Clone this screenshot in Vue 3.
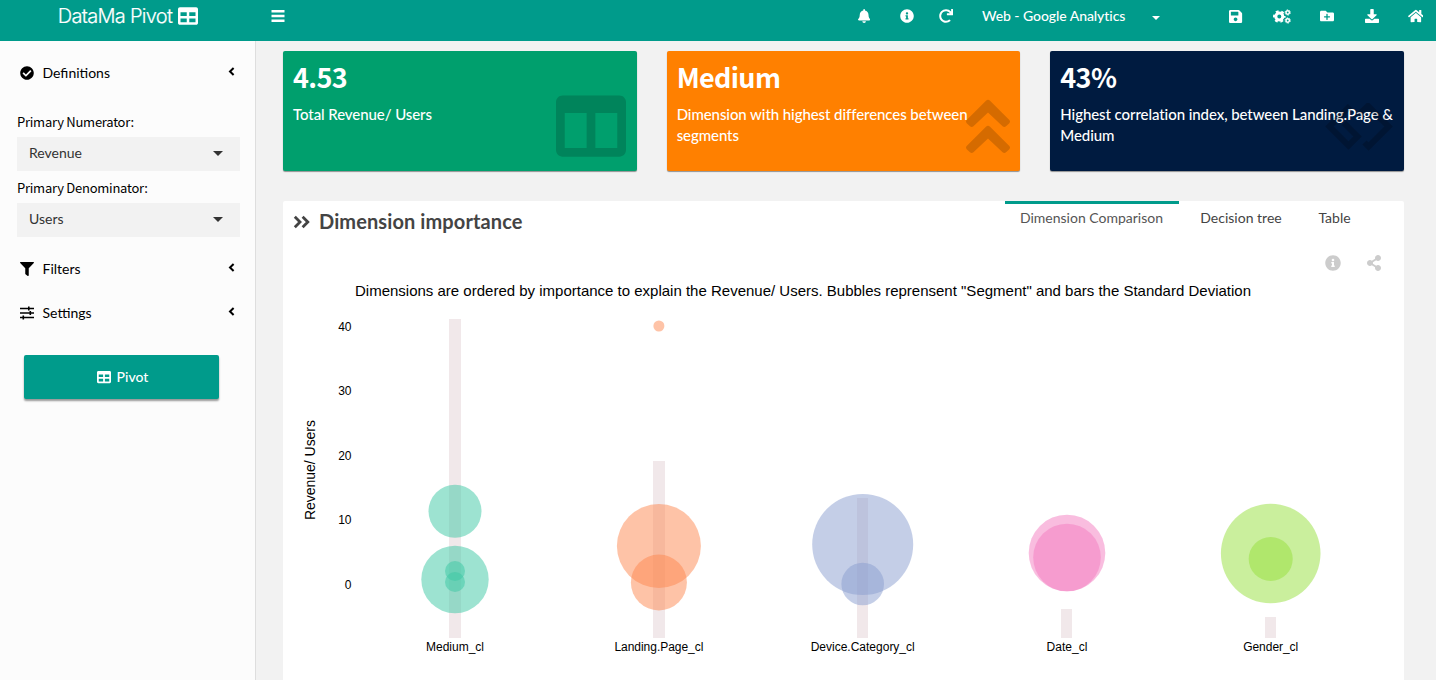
<script setup>
import { h } from 'vue'

const glyphs = {
  table: [512, 512, 'M464 32H48C21.49 32 0 53.49 0 80v352c0 26.51 21.49 48 48 48h416c26.51 0 48-21.49 48-48V80c0-26.51-21.49-48-48-48zM224 416H64v-96h160v96zm0-160H64v-96h160v96zm224 160H288v-96h160v96zm0-160H288v-96h160v96z'],
  columns: [512, 512, 'M464 32H48C21.49 32 0 53.49 0 80v352c0 26.51 21.49 48 48 48h416c26.51 0 48-21.49 48-48V80c0-26.51-21.49-48-48-48zM224 416H64V160h160v256zm224 0H288V160h160v256z'],
  bell: [448, 512, 'M224 512c35.32 0 63.97-28.65 63.97-64H160.03c0 35.35 28.65 64 63.97 64zm215.39-149.71c-19.32-20.76-55.47-51.99-55.47-154.29 0-77.7-54.48-139.9-127.94-155.16V32c0-17.67-14.32-32-31.98-32s-31.98 14.33-31.98 32v20.84C118.56 68.1 64.08 130.3 64.08 208c0 102.3-36.15 133.53-55.47 154.29-6 6.45-8.66 14.16-8.61 21.71.11 16.4 12.98 32 32.1 32h383.8c19.12 0 32-15.6 32.1-32 .05-7.55-2.61-15.27-8.61-21.71z'],
  info: [512, 512, 'M256 8C119.043 8 8 119.083 8 256c0 136.997 111.043 248 248 248s248-111.003 248-248C504 119.083 392.957 8 256 8zm0 110c23.196 0 42 18.804 42 42s-18.804 42-42 42-42-18.804-42-42 18.804-42 42-42zm56 254c0 6.627-5.373 12-12 12h-88c-6.627 0-12-5.373-12-12v-24c0-6.627 5.373-12 12-12h12v-64h-12c-6.627 0-12-5.373-12-12v-24c0-6.627 5.373-12 12-12h64c6.627 0 12 5.373 12 12v100h12c6.627 0 12 5.373 12 12v24z'],
  redo: [512, 512, 'M500.33 0h-47.41a12 12 0 0 0-12 12.57l4 82.76A247.42 247.42 0 0 0 256 8C119.34 8 7.9 119.53 8 256.19 8.1 393.07 119.1 504 256 504a247.1 247.1 0 0 0 166.18-63.91 12 12 0 0 0 .48-17.43l-34-34a12 12 0 0 0-16.38-.55A176 176 0 1 1 402.1 157.8l-101.53-4.87a12 12 0 0 0-12.57 12v47.41a12 12 0 0 0 12 12h200.33a12 12 0 0 0 12-12V12a12 12 0 0 0-12-12z'],
  save: [448, 512, 'M433.941 129.941l-83.882-83.882A48 48 0 0 0 316.118 32H48C21.49 32 0 53.49 0 80v352c0 26.51 21.49 48 48 48h352c26.51 0 48-21.49 48-48V163.882a48 48 0 0 0-14.059-33.941zM224 416c-35.346 0-64-28.654-64-64 0-35.346 28.654-64 64-64s64 28.654 64 64c0 35.346-28.654 64-64 64zm96-304.52V212c0 6.627-5.373 12-12 12H76c-6.627 0-12-5.373-12-12V108c0-6.627 5.373-12 12-12h228.52c3.183 0 6.235 1.264 8.485 3.515l3.48 3.48A11.996 11.996 0 0 1 320 111.48z'],
  folder: [512, 512, 'M464 128H272l-64-64H48C21.49 64 0 85.49 0 112v288c0 26.51 21.49 48 48 48h416c26.51 0 48-21.49 48-48V176c0-26.51-21.49-48-48-48zm-96 168c0 8.84-7.16 16-16 16h-72v72c0 8.84-7.16 16-16 16h-16c-8.84 0-16-7.16-16-16v-72h-72c-8.84 0-16-7.16-16-16v-16c0-8.84 7.16-16 16-16h72v-72c0-8.84 7.16-16 16-16h16c8.84 0 16 7.16 16 16v72h72c8.84 0 16 7.16 16 16v16z'],
  download: [512, 512, 'M216 0h80c13.3 0 24 10.7 24 24v168h87.7c17.8 0 26.7 21.5 14.1 34.1L269.7 378.3c-7.5 7.5-19.8 7.5-27.3 0L90.1 226.1c-12.6-12.6-3.7-34.1 14.1-34.1H192V24c0-13.3 10.7-24 24-24zm296 376v112c0 13.3-10.7 24-24 24H24c-13.3 0-24-10.7-24-24V376c0-13.3 10.7-24 24-24h146.7l49 49c20.1 20.1 52.5 20.1 72.6 0l49-49H488c13.3 0 24 10.7 24 24z'],
  home: [576, 512, 'M280.37 148.26L96 300.11V464a16 16 0 0 0 16 16l112.06-.29a16 16 0 0 0 15.92-16V368a16 16 0 0 1 16-16h64a16 16 0 0 1 16 16v95.64a16 16 0 0 0 16 16.05L464 480a16 16 0 0 0 16-16V300L295.67 148.26a12.19 12.19 0 0 0-15.3 0zM571.6 251.47L488 182.56V44.05a12 12 0 0 0-12-12h-56a12 12 0 0 0-12 12v72.61L318.47 43a48 48 0 0 0-61 0L4.34 251.47a12 12 0 0 0-1.6 16.9l25.5 31A12 12 0 0 0 45.15 301l235.22-193.74a12.19 12.19 0 0 1 15.3 0L530.9 301a12 12 0 0 0 16.9-1.6l25.5-31a12 12 0 0 0-1.7-16.93z'],
  check: [512, 512, 'M504 256c0 136.967-111.033 248-248 248S8 392.967 8 256 119.033 8 256 8s248 111.033 248 248zM227.314 387.314l184-184c6.248-6.248 6.248-16.379 0-22.627l-22.627-22.627c-6.248-6.249-16.379-6.249-22.628 0L216 308.118l-70.059-70.059c-6.248-6.248-16.379-6.248-22.628 0l-22.627 22.627c-6.248 6.248-6.248 16.379 0 22.627l104 104c6.249 6.249 16.379 6.249 22.628.001z'],
  filter: [512, 512, 'M487.976 0H24.028C2.71 0-8.047 25.866 7.058 40.971L192 225.941V432c0 7.831 3.821 15.17 10.237 19.662l80 55.98C298.02 518.69 320 507.493 320 487.98V225.941l184.947-184.97C520.021 25.896 509.338 0 487.976 0z'],
  sliders: [14, 14, 'M0 1.700h8V.500h1.600v1.200H14v1.600H9.600v1.100H8V3.300H0zM0 6.200h9.500V5h1.600v1.200H14v1.600h-2.900V9H9.500V7.800H0zM0 10.700h2.500V9.500h1.600v1.200H14v1.600H4.100v1.200H2.500v-1.200H0z'],
  share: [448, 512, 'M352 320c-22.608 0-43.387 7.819-59.79 20.895l-102.486-64.054a96.551 96.551 0 0 0 0-41.683l102.486-64.054C308.613 184.181 329.392 192 352 192c53.019 0 96-42.981 96-96S405.019 0 352 0s-96 42.981-96 96c0 7.158.79 14.13 2.276 20.841L155.79 180.895C139.387 167.819 118.608 160 96 160c-53.019 0-96 42.981-96 96s42.981 96 96 96c22.608 0 43.387-7.819 59.79-20.895l102.486 64.054A96.301 96.301 0 0 0 256 416c0 53.019 42.981 96 96 96s96-42.981 96-96-42.981-96-96-96z'],
  bars: [14, 12, 'M.5 0h13v2.500h-13zM.5 4.700h13v2.500h-13zM.5 9.400h13v2.500h-13z'],
  caret: [10, 5, 'M0 0h10L5 5z']
}

const Icon = (props) => {
  const [w, ht, d] = glyphs[props.name]
  return h('svg', { viewBox: `0 0 ${w} ${ht}`, width: (props.size * w) / ht, height: props.size, fill: 'currentColor' }, [h('path', { d })])
}
Icon.props = ['name', 'size']

const cards = [
  { tone: 'green', value: '4.53', label: 'Total Revenue/ Users' },
  { tone: 'orange', value: 'Medium', label: 'Dimension with highest differences between segments' },
  { tone: 'navy', value: '43%', label: 'Highest correlation index, between Landing.Page & Medium' }
]

const ticks = [[40, 326], [30, 390.500], [20, 455], [10, 519.500], [0, 584]]

const groups = [
  { name: 'Medium_cl', x: 455, top: 319, color: '#3cc8a3', w: 58, dots: [[511.300, 26.500], [579.500, 33.700], [571, 10], [582, 10]] },
  { name: 'Landing.Page_cl', x: 658.900, top: 461, color: '#fd8850', w: 89, dots: [[326, 5.500], [546, 42], [582.500, 28]] },
  { name: 'Device.Category_cl', x: 862.700, top: 498, color: '#8a9dd0', w: 104, dots: [[544.500, 50.500], [584, 21.300]] },
  { name: 'Date_cl', x: 1067, top: 609, color: '#f37bc0', w: 41, dots: [[553, 38.300], [557.500, 33.800]] },
  { name: 'Gender_cl', x: 1270.700, top: 617, color: '#95e03b', w: 55, dots: [[553.500, 49.800], [559, 22]] }
]
</script>

<template>
  <div class="app">
    <header class="topbar">
      <div class="brand"><span class="brand-name">DataMa Pivot</span><Icon name="table" :size="20" /></div>
      <div class="toggle"><Icon name="bars" :size="12" /></div>
      <div class="cell c42"><Icon name="bell" :size="14" /></div>
      <div class="cell c43"><Icon name="info" :size="14" /></div>
      <div class="cell c36"><Icon name="redo" :size="14" /></div>
      <div class="source"><span>Web - Google Analytics</span><Icon class="source-caret" name="caret" :size="4" /></div>
      <nav class="actions">
        <div class="cell c46"><Icon name="save" :size="15" /></div>
        <div class="cell c45">
          <svg width="18" height="15" viewBox="0 0 18 15" fill="none" stroke="#fff">
            <circle cx="6.300" cy="7.500" r="3.500" stroke-width="3" />
            <circle cx="6.300" cy="7.500" r="5.300" stroke-width="2" stroke-dasharray="2.800 2.750" stroke-dashoffset="1.400" />
            <circle cx="14.700" cy="3.500" r="1.700" stroke-width="1.500" />
            <circle cx="14.700" cy="3.500" r="2.600" stroke-width="1" stroke-dasharray="1.500 1.220" />
            <circle cx="14.700" cy="11.500" r="1.700" stroke-width="1.500" />
            <circle cx="14.700" cy="11.500" r="2.600" stroke-width="1" stroke-dasharray="1.500 1.220" />
          </svg>
        </div>
        <div class="cell c45"><Icon name="folder" :size="14" /></div>
        <div class="cell c45"><Icon name="download" :size="14" /></div>
        <div class="cell c43"><Icon name="home" :size="14" /></div>
      </nav>
    </header>

    <div class="body">
      <aside class="sidebar">
        <div class="menu first">
          <Icon name="check" :size="14" /><span>Definitions</span>
          <svg class="chev" width="7" height="9" viewBox="0 0 7 9"><path d="M5.600 1L2 4.500l3.600 3.500" /></svg>
        </div>
        <label class="field-label num">Primary Numerator:</label>
        <div class="select"><span>Revenue</span><Icon name="caret" :size="5" /></div>
        <label class="field-label den">Primary Denominator:</label>
        <div class="select"><span>Users</span><Icon name="caret" :size="5" /></div>
        <div class="menu filters">
          <Icon name="filter" :size="14" /><span>Filters</span>
          <svg class="chev" width="7" height="9" viewBox="0 0 7 9"><path d="M5.600 1L2 4.500l3.600 3.500" /></svg>
        </div>
        <div class="menu">
          <Icon name="sliders" :size="14" /><span>Settings</span>
          <svg class="chev" width="7" height="9" viewBox="0 0 7 9"><path d="M5.600 1L2 4.500l3.600 3.500" /></svg>
        </div>
        <button class="pivot"><Icon name="table" :size="14" /><span>Pivot</span></button>
      </aside>

      <main class="main">
        <section class="cards">
          <article v-for="c in cards" :key="c.tone" class="card" :class="c.tone">
            <h3>{{ c.value }}</h3>
            <p>{{ c.label }}</p>
            <div class="mark">
              <Icon v-if="c.tone === 'green'" name="columns" :size="70" />
              <svg v-else-if="c.tone === 'orange'" width="46" height="56" viewBox="0 0 46 56">
                <path d="M23 .800q1 0 2 1L44.300 21q1.400 1.600 0 3.200L41 27.300q-1.700 1.500-3.400 0L23 13.500 8.400 27.300q-1.700 1.500-3.400 0L1.700 24.200q-1.400-1.600 0-3.200L21 1.800q1-1 2-1zM23 26.800q1 0 2 1L44.300 47q1.400 1.600 0 3.200L41 53.300q-1.700 1.500-3.400 0L23 39.500 8.400 53.300q-1.700 1.500-3.400 0L1.700 50.200q-1.400-1.600 0-3.200L21 27.800q1-1 2-1z" />
              </svg>
              <svg v-else width="68" height="48" viewBox="0 0 68 48" fill="none" stroke="#000" stroke-width="6">
                <path d="M25 3L4.500 23.500l19 19L32.500 33.500 19 20M33 12.500l10-9.500 20.500 20.500-20 20-4-4" />
              </svg>
            </div>
          </article>
        </section>

        <section class="panel">
          <div class="panel-head">
            <svg class="dbl" width="18" height="14" viewBox="0 0 18 14"><path d="M1.800 1.800L7 7l-5.200 5.200M9.600 1.800L14.800 7l-5.200 5.200" /></svg>
            <h2>Dimension importance</h2>
            <nav class="tabs">
              <a class="tab active">Dimension Comparison</a>
              <a class="tab tree">Decision tree</a>
              <a class="tab tbl">Table</a>
            </nav>
          </div>
          <div class="tools"><Icon name="info" :size="16" /><Icon name="share" :size="16" /></div>
          <svg class="chart" width="1121" height="400" viewBox="283 280 1121 400">
            <text class="title" x="355" y="296" textLength="896">Dimensions are ordered by importance to explain the Revenue/ Users. Bubbles reprensent "Segment" and bars the Standard Deviation</text>
            <text v-for="t in ticks" :key="t[0]" class="tick" x="351.500" :y="t[1] + 4.800" text-anchor="end">{{ t[0] }}</text>
            <text class="axis" transform="translate(315 470) rotate(-90)" text-anchor="middle" textLength="100">Revenue/ Users</text>
            <g v-for="g in groups" :key="g.name">
              <rect :x="Math.round(g.x - 6)" :y="g.top" :width="g.x > 800 ? 11 : 12" :height="638 - g.top" fill="#f1e8ea" />
              <circle v-for="(d, i) in g.dots" :key="i" :cx="g.x" :cy="d[0]" :r="d[1]" :fill="g.color" fill-opacity="0.5" />
              <text class="tick" :x="g.x" y="651" text-anchor="middle" :textLength="g.w">{{ g.name }}</text>
            </g>
          </svg>
        </section>
      </main>
    </div>
  </div>
</template>

<style>
body { overflow: hidden; }
</style>

<style scoped>
.app { width: 1436px; height: 680px; overflow: hidden; background: #f2f2f2; font-family: Lato, "Open Sans", sans-serif; font-size: 14px; display: flex; flex-direction: column; }
svg { flex: none; display: block; }
.topbar { height: 41px; flex: none; background: #009b8b; color: #fff; display: flex; }
.brand { width: 256px; flex: none; height: 31px; display: flex; align-items: center; justify-content: center; gap: 6px; }
.brand-name { font: 300 20px/30px Inter, "Liberation Sans", sans-serif; letter-spacing: -0.7px; white-space: nowrap; -webkit-text-stroke: .2px #fff; }
.toggle { width: 587px; flex: none; height: 32px; padding-left: 15px; box-sizing: border-box; display: flex; align-items: center; }
.cell { height: 32px; display: flex; align-items: center; justify-content: center; flex: none; }
.c36 { width: 36px; } .c42 { width: 42px; } .c43 { width: 43px; } .c45 { width: 45px; } .c46 { width: 46px; }
.source { width: 249px; flex: none; height: 30px; padding-left: 18px; box-sizing: border-box; display: flex; align-items: center; font-weight: 500; gap: 26px; }
.source span { width: 144px; white-space: nowrap; letter-spacing: -0.06px; }
.source-caret { margin-top: 5px; }
.actions { display: flex; flex: none; }
.body { flex: 1; display: flex; min-height: 0; }
.sidebar { width: 255px; flex: none; background: #fcfcfc; border-right: 1px solid #dedede; color: #000; box-sizing: content-box; }
.menu { height: 44px; padding: 0 20px; display: flex; align-items: center; gap: 8.500px; }
.menu span, .pivot span { padding-bottom: 2px; }
.select span { padding-bottom: 3px; }
.menu.first { margin-top: 10px; }
.menu.filters { margin-top: 10px; }
.chev { margin: 0 0 3px auto; fill: none; stroke: #000; stroke-width: 2; }
.field-label { display: block; height: 20px; padding-left: 17px; font: 400 13px/20px "Noto Sans CJK SC", sans-serif; letter-spacing: -0.250px; }
.num { margin-top: 17px; margin-bottom: 5px; }
.den { margin-top: 7px; margin-bottom: 5px; }
.select { width: 223px; height: 34px; margin-left: 17px; background: #f2f2f2; color: #333; display: flex; align-items: center; justify-content: space-between; padding: 0 17px 0 12px; box-sizing: border-box; }
.select svg { margin-bottom: 1px; }
.pivot { margin: 20px 0 0 24px; width: 195px; height: 44px; border: 0; border-radius: 2px; background: #009b8b; color: #fff; font: 500 14px Lato, sans-serif; display: flex; align-items: center; justify-content: center; gap: 6px; box-shadow: 0 2px 2px rgba(0, 0, 0, .4); padding: 0 0 0 2px; }
.main { flex: 1; padding: 10px 32px 0 27px; min-width: 0; display: flex; flex-direction: column; }
.cards { display: grid; grid-template-columns: repeat(3, 1fr); gap: 30px; height: 120px; flex: none; }
.card { position: relative; color: #fff; border-radius: 2px; padding: 9px 10px 10px; box-shadow: 0 1px 1px rgba(0, 0, 0, .4); box-sizing: border-box; }
.card h3 { margin: 0; font: 700 27px/33px "Noto Sans CJK SC", sans-serif; letter-spacing: -0.650px; }
.card p { margin: 11px -5px 0 0; font-size: 15px; line-height: 21px; position: relative; font-weight: 500; letter-spacing: -0.080px; }
.green { background: #009f6d; } .orange { background: #ff8000; } .navy { background: #001b40; }
.mark { position: absolute; opacity: .16; color: #000; }
.green .mark { right: 11px; top: 40px; }
.orange .mark { right: 9px; top: 48px; }
.navy .mark { right: 11px; top: 52px; opacity: .2; }
.panel { margin-top: 30px; flex: 1; background: #fff; display: flex; flex-direction: column; border-radius: 2px 2px 0 0; overflow: hidden; }
.panel-head { display: flex; height: 42px; flex: none; color: #444; }
.dbl { margin: 14px 8px 0 10px; fill: none; stroke: #444; stroke-width: 2.800; }
h2 { margin: 0; font-size: 20px; line-height: 41px; font-weight: 700; white-space: nowrap; letter-spacing: 0.100px; }
.tabs { display: flex; margin-left: auto; margin-right: 38px; }
.tab { height: 42px; box-sizing: border-box; border-top: 3px solid transparent; line-height: 28px; text-align: center; color: #444; white-space: nowrap; }
.active { width: 174px; border-color: #009b8b; color: #555; padding-right: 1px; }
.tree { width: 124px; } .tbl { width: 63px; }
.tools { height: 37px; flex: none; display: flex; justify-content: flex-end; gap: 26px; padding: 12px 23px 0 0; box-sizing: border-box; color: #ccc; }
.chart { font-family: "Liberation Sans", Arial, sans-serif; }
.title { font-size: 15px; }
.tick { font-size: 12px; }
.axis { font-size: 14px; }
</style>
